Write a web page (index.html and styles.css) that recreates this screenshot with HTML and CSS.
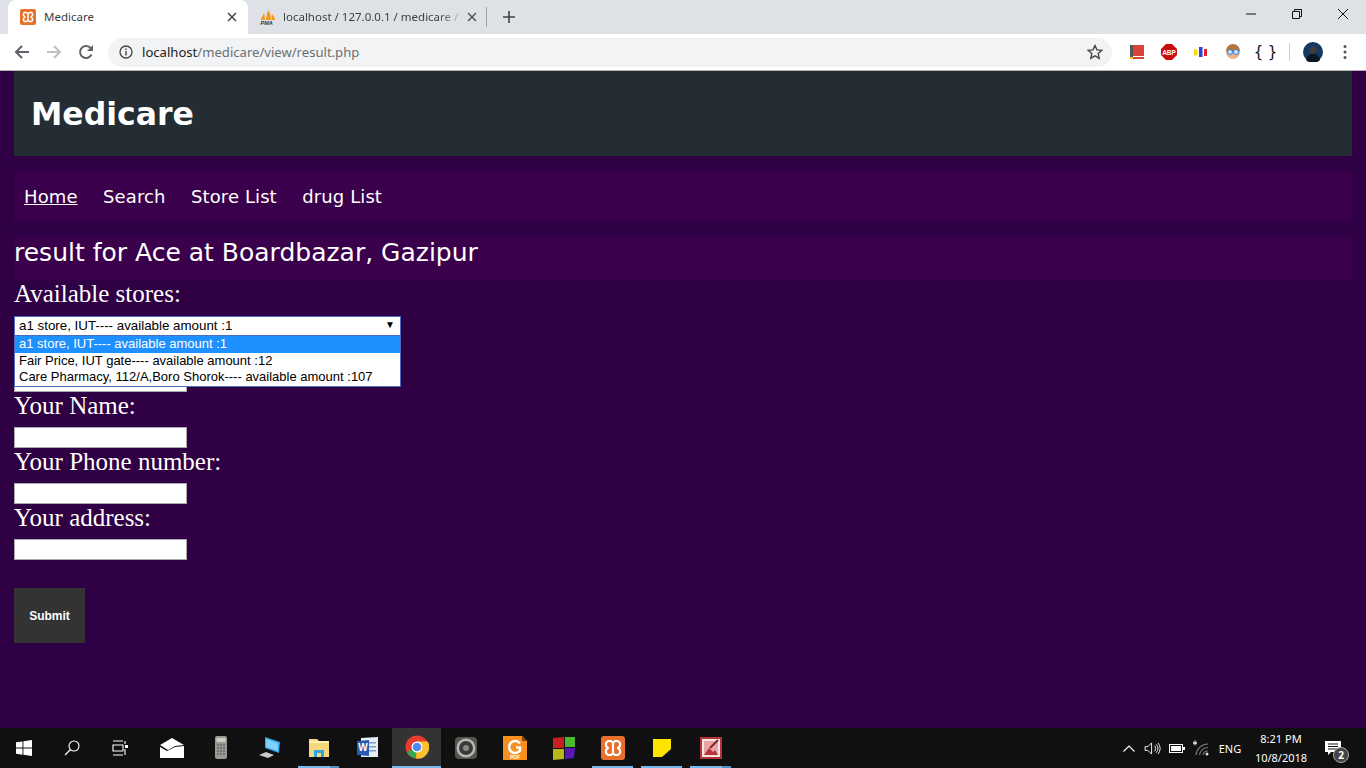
FILE: index.html
```html
<!DOCTYPE html>
<html lang="en">
<head>
    <meta charset="UTF-8">
    <meta name="viewport" content="width=device-width, initial-scale=1.0">
    <title>Medicare</title>
    <link rel="stylesheet" href="styles.css">
</head>
<body>

    <!-- Browser tabs -->
    <div class="tabstrip">
        <div class="tab active">
            <svg class="favicon" viewBox="0 0 16 16"><rect width="16" height="16" rx="2" fill="#e8702a"/><path d="M4.500 3.500h2L8 5l1.500-1.500h2l1 1v2L11 8l1.500 1.500v2l-1 1h-2L8 11l-1.500 1.500h-2l-1-1v-2L5 8 3.500 6.500v-2zM8 5v6" fill="none" stroke="#fff" stroke-width="1.500" stroke-linejoin="round"/></svg>
            <span class="tab-title">Medicare</span>
            <svg class="tab-close" viewBox="0 0 10 10"><path d="M1 1l8 8M9 1l-8 8" stroke="#444" stroke-width="1.500"/></svg>
        </div>
        <div class="tab">
            <svg class="favicon" viewBox="0 0 16 16"><path d="M1 11c0-3 2-4 3-7 .5 2 1 4 1 7zM6 11c0-4 1-7 2.500-10C10 4 11 7 11 11zM11.500 11c0-2 0-4 .5-6 1.500 2 3 4 3 6z" fill="#f29a1f"/><text x="0.500" y="15.500" class="pma">PMA</text></svg>
            <span class="tab-title fade">localhost / 127.0.0.1 / medicare /</span>
            <svg class="tab-close" viewBox="0 0 10 10"><path d="M1 1l8 8M9 1l-8 8" stroke="#555" stroke-width="1.500"/></svg>
        </div>
        <div class="tab-sep"></div>
        <svg class="new-tab" viewBox="0 0 12 12"><path d="M6 0v12M0 6h12" stroke="#444" stroke-width="1.600"/></svg>
        <div class="win-controls">
            <svg viewBox="0 0 12 12"><path d="M1 6h10" stroke="#111" stroke-width="1"/></svg>
            <svg viewBox="0 0 12 12"><path d="M1.500 3.500h7v7h-7zM3.500 3.500v-2h7v7h-2" fill="none" stroke="#111" stroke-width="1"/></svg>
            <svg viewBox="0 0 12 12"><path d="M1 1l10 10M11 1L1 11" stroke="#111" stroke-width="1"/></svg>
        </div>
    </div>

    <!-- Address bar -->
    <div class="toolbar">
        <svg class="nav-icon" viewBox="0 0 16 16"><path d="M15 8H2M8 2L2 8l6 6" fill="none" stroke="#5f6368" stroke-width="2"/></svg>
        <svg class="nav-icon" viewBox="0 0 16 16"><path d="M1 8h13M8 2l6 6-6 6" fill="none" stroke="#bdc1c6" stroke-width="2"/></svg>
        <svg class="nav-icon" viewBox="0 0 16 16"><path d="M13.500 10.500A6 6 0 1 1 12.300 3.800L14 5.500" fill="none" stroke="#5f6368" stroke-width="2"/><path d="M15 1v6H9z" fill="#5f6368"/></svg>
        <div class="omnibox">
            <svg class="info" viewBox="0 0 14 14"><circle cx="7" cy="7" r="6" fill="none" stroke="#444" stroke-width="1.300"/><path d="M7 6v4.500M7 3.500v1.500" stroke="#444" stroke-width="1.400"/></svg>
            <span class="url"><span class="host">localhost</span>/medicare/view/result.php</span>
            <svg class="star" viewBox="0 0 16 16"><path d="M8 1.500l2 4.400 4.800.5-3.600 3.200 1 4.700L8 11.900l-4.200 2.400 1-4.700L1.200 6.400 6 5.900z" fill="none" stroke="#444" stroke-width="1.400"/></svg>
        </div>
        <div class="extensions">
            <svg viewBox="0 0 16 16"><rect x="1" y="1" width="14" height="14" fill="#d9433a"/><rect x="1" y="1" width="3" height="14" fill="#555"/><rect x="4" y="12" width="11" height="1" fill="#fff"/><path d="M1 13h3v2H1z" fill="#f5c518"/></svg>
            <svg viewBox="0 0 16 16"><path d="M5 0h6l5 5v6l-5 5H5l-5-5V5z" fill="#c70d0d"/><text x="8" y="10.800" class="abp">ABP</text></svg>
            <svg viewBox="0 0 16 16"><rect x="1" y="5.500" width="3.500" height="6" fill="#f5d90a"/><rect x="6" y="3" width="3.500" height="10" fill="#2a43d8"/><rect x="11" y="5" width="3" height="7" fill="#e8202a"/></svg>
            <svg viewBox="0 0 16 16"><circle cx="8" cy="8" r="7" fill="#e8b48c"/><path d="M1 7a7 7 0 0 1 14 0z" fill="#b5743a"/><circle cx="5" cy="8" r="2.500" fill="#cfe6fb" stroke="#2a7fd8"/><circle cx="11" cy="8" r="2.500" fill="#cfe6fb" stroke="#2a7fd8"/></svg>
            <span class="braces">{ }</span>
        </div>
        <div class="toolbar-sep"></div>
        <svg class="avatar" viewBox="0 0 20 20"><circle cx="10" cy="10" r="10" fill="#123a63"/><circle cx="10" cy="8" r="3.500" fill="#4a3a35"/><path d="M3 18c1-5 4-6 7-6s6 1 7 6a10 10 0 0 1-14 0z" fill="#0b1524"/></svg>
        <svg class="menu" viewBox="0 0 4 16"><circle cx="2" cy="2.500" r="1.500" fill="#555"/><circle cx="2" cy="8" r="1.500" fill="#555"/><circle cx="2" cy="13.500" r="1.500" fill="#555"/></svg>
    </div>

    <!-- Page content -->
    <div class="page">
        <div class="site-header">
            <h1>Medicare</h1>
        </div>

        <div class="site-nav">
            <a class="current" href="#">Home</a>
            <a href="#">Search</a>
            <a href="#">Store List</a>
            <a href="#">drug List</a>
        </div>

        <h2 class="result-title">result for Ace at Boardbazar, Gazipur</h2>

        <form class="order-form">
            <label>Available stores:</label>
            <div class="store-select">
                <div class="store-current">a1 store, IUT---- available amount :1<span class="arrow">&#9660;</span></div>
                <div class="store-list">
                    <div class="store-option selected">a1 store, IUT---- available amount :1</div>
                    <div class="store-option">Fair Price, IUT gate---- available amount :12</div>
                    <div class="store-option">Care Pharmacy, 112/A,Boro Shorok---- available amount :107</div>
                </div>
            </div>
            <input type="text">
            <label>Your Name:</label>
            <input type="text">
            <label>Your Phone number:</label>
            <input type="text">
            <label>Your address:</label>
            <input type="text">
            <button type="button" class="submit-btn">Submit</button>
        </form>
    </div>

    <!-- Windows taskbar -->
    <div class="taskbar">
        <div class="task"><svg viewBox="0 0 16 16"><path d="M0 2.300l6.500-.9v6.200H0zM7.400 1.300L16 0v7.600H7.400zM0 8.500h6.500v6.200L0 13.800zM7.400 8.500H16V16l-8.600-1.200z" fill="#fff"/></svg></div>
        <div class="task"><svg viewBox="0 0 16 16"><circle cx="10" cy="6" r="5" fill="none" stroke="#fff" stroke-width="1.100"/><path d="M6.500 9.500L1 15" stroke="#fff" stroke-width="1.300"/></svg></div>
        <div class="task"><svg viewBox="0 0 16 16"><path d="M1 1h10M1 5h10v6H1zM1 15h10M13 1v3M13 9v6" fill="none" stroke="#fff" stroke-width="1.100"/><rect x="13" y="5" width="3" height="3" fill="#fff"/></svg></div>
        <div class="task"><svg class="big" viewBox="0 0 24 20"><path d="M0 7l12-7 12 7-9 1-7 4z" fill="#fff"/><path d="M0 9l7 4 8-4 9-1v12H0z" fill="#fff"/></svg></div>
        <div class="task"><svg class="big" viewBox="0 0 24 24"><rect x="6" y="0" width="12" height="23" rx="2" fill="#9a9a94"/><rect x="7.500" y="2" width="9" height="4" fill="#c8d0c0"/><path d="M8 9h8M8 12h8M8 15h8M8 18h8" stroke="#666" stroke-width="1.500" stroke-dasharray="2 1"/></svg></div>
        <div class="task"><svg class="big" viewBox="0 0 24 24"><path d="M7 1l15 5-1 11-14-5z" fill="#35a7ee"/><path d="M8 3l12 4v8L8 11z" fill="#7fd0fa"/><path d="M1 19l7-3 8 3-6 3z" fill="#c8ccd0"/></svg></div>
        <div class="task pinned stacked"><svg class="big" viewBox="0 0 24 24"><path d="M2 3h8l2 2h10v16H2z" fill="#f6d77c"/><rect x="2" y="5" width="20" height="2" fill="#fff0b8"/><path d="M7 21v-7h10v7h-3v-4h-4v4z" fill="#2fa5e8"/></svg></div>
        <div class="task"><svg class="big" viewBox="0 0 24 24"><path d="M5 2l17-1v20H5z" fill="#e6edf7"/><rect x="13" y="6" width="7" height="1.500" fill="#7c9bd0"/><rect x="13" y="10" width="7" height="1.500" fill="#7c9bd0"/><rect x="13" y="14" width="7" height="1.500" fill="#7c9bd0"/><path d="M1 5l12-1v16L1 19z" fill="#2a5bb0"/><text x="7" y="15" class="word">W</text></svg></div>
        <div class="task active"><svg class="big" viewBox="0 0 24 24"><circle cx="12" cy="12" r="11.500" fill="#e53d30"/><path d="M12 12L2 17a11.500 11.500 0 0 0 9 6.500z" fill="#34a853"/><path d="M12 6.500h10.700A11.500 11.500 0 0 1 11 23.500z" fill="#fbc02d"/><circle cx="12" cy="12" r="5.500" fill="#fff"/><circle cx="12" cy="12" r="4.300" fill="#4a8af4"/></svg></div>
        <div class="task"><svg class="big" viewBox="0 0 24 24"><rect x="1" y="1" width="22" height="22" rx="4" fill="#55554f"/><circle cx="12" cy="12" r="9.500" fill="#b8b8b4"/><circle cx="12" cy="12" r="7" fill="#3a3a38"/><circle cx="12" cy="12" r="3" fill="#8a8a86"/></svg></div>
        <div class="task"><svg class="big" viewBox="0 0 24 24"><path d="M0 0h19l5 5v19H0z" fill="#f7901e"/><path d="M19 0l5 5h-5z" fill="#7a4a10"/><path d="M17 7.500a6 6 0 1 0 0 7v-3h-4" fill="none" stroke="#fff" stroke-width="2.500"/><text x="12" y="22.500" class="fox">PDF</text></svg></div>
        <div class="task"><svg class="big" viewBox="0 0 24 24"><path d="M1 2l11-1v11H1z" fill="#c8201c"/><path d="M13 1l10 0v10H13z" fill="#4cb82c"/><path d="M1 13h11v10L1 24z" fill="#b8b81e"/><path d="M13 12h10l-1 10-9 1z" fill="#5a18b8"/></svg></div>
        <div class="task pinned"><svg class="big" viewBox="0 0 24 24"><rect width="24" height="24" rx="3" fill="#e8702a"/><path d="M7 5h3l2 2 2-2h3l2 2v3l-2 2 2 2v3l-2 2h-3l-2-2-2 2H7l-2-2v-3l2-2-2-2V7zM12 7v10" fill="none" stroke="#fff" stroke-width="2.200" stroke-linejoin="round"/></svg></div>
        <div class="task pinned"><svg class="big" viewBox="0 0 24 24"><rect x="3" y="3" width="18" height="18" fill="#fde400"/><path d="M21 13v8H12z" fill="#111"/></svg></div>
        <div class="task pinned stacked"><svg class="big" viewBox="0 0 24 24"><rect x="1" y="1" width="22" height="22" fill="#b8323a"/><rect x="3" y="3" width="18" height="18" fill="#f6e6e2"/><rect x="5" y="5" width="14" height="14" fill="#e9a5a5"/><path d="M5 19l5-7 4 4 2-2 3 5z" fill="#b8323a"/><path d="M11 12l8-8" stroke="#8c1f28" stroke-width="2"/></svg></div>

        <div class="tray">
            <svg class="tray-chevron" viewBox="0 0 12 7"><path d="M.5 6.500L6 1l5.500 5.500" fill="none" stroke="#fff" stroke-width="1.100"/></svg>
            <svg class="tray-speaker" viewBox="0 0 18 14"><path d="M1 5h3l4-4v12l-4-4H1z" fill="none" stroke="#fff"/><path d="M11 4a4 4 0 0 1 0 6M13 2.500a7 7 0 0 1 0 9M15 1a10 10 0 0 1 0 12" fill="none" stroke="#fff"/></svg>
            <svg class="tray-battery" viewBox="0 0 16 9"><rect x=".5" y=".5" width="13" height="8" fill="none" stroke="#fff"/><rect x="2" y="2" width="10" height="5" fill="#fff"/><rect x="14" y="3" width="2" height="3" fill="#fff"/></svg>
            <svg class="tray-wifi" viewBox="0 0 16 16"><path d="M3 15A12 12 0 0 1 15 4M6.500 15A8.500 8.500 0 0 1 15 7.500M10 15a5 5 0 0 1 5-4" fill="none" stroke="#777" stroke-width="1.200"/><circle cx="14" cy="14" r="1.500" fill="#ddd"/><path d="M2 .5v5M0 2l4 2M4 2L0 4" stroke="#fff" stroke-width=".9"/></svg>
            <span class="tray-lang">ENG</span>
            <div class="tray-clock"><span>8:21 PM</span><span>10/8/2018</span></div>
            <div class="tray-notify">
                <svg viewBox="0 0 16 15"><path d="M0 0h16v11H6l-3 3v-3H0z" fill="#fff"/><path d="M3 3h10M3 5.500h10M3 8h10" stroke="#111"/></svg>
                <span class="notify-count">2</span>
            </div>
        </div>
    </div>

</body>
</html>
```

FILE: styles.css
```css
* {
    box-sizing: border-box;
}
body {
    margin: 0;
    height: 100vh;
    display: flex;
    flex-direction: column;
    overflow: hidden;
    background-color: #300044;
    font-family: 'Liberation Serif', serif;
}

/* Browser tabs */
.tabstrip {
    height: 34px;
    flex: none;
    display: flex;
    align-items: flex-end;
    padding-left: 8px;
    background-color: #dee1e6;
    font-family: 'Noto Sans', sans-serif;
}
.tab {
    width: 240px;
    height: 34px;
    flex: none;
    display: flex;
    align-items: center;
    padding: 0 11px 0 12px;
    font-size: 11.5px;
    color: #3c4043;
}
.tab.active {
    background-color: #fff;
    border-radius: 8px 8px 0 0;
}
.tab .favicon {
    width: 16px;
    height: 16px;
    flex: none;
    margin-right: 8px;
}
.tab + .tab .favicon {
    margin-right: 7px;
}
.tab-title {
    flex: 1;
    padding-bottom: 1px;
    white-space: nowrap;
    overflow: hidden;
}
.tab-title.fade {
    -webkit-mask-image: linear-gradient(to right, #000 88%, rgba(0, 0, 0, 0.2));
    mask-image: linear-gradient(to right, #000 88%, rgba(0, 0, 0, 0.2));
}
.tab-close {
    width: 10px;
    height: 10px;
    flex: none;
    margin-left: 8px;
}
.pma {
    font: italic bold 5.500px 'Liberation Sans', sans-serif;
    fill: #333;
}
.tab-sep {
    width: 1px;
    height: 20px;
    margin: 0 0 7px -2px;
    background-color: #a0a4a8;
}
.new-tab {
    width: 12px;
    height: 12px;
    margin: 0 0 11px 16px;
}
.win-controls {
    margin-left: auto;
    align-self: flex-start;
    display: flex;
    gap: 34px;
    padding: 8px 17px 0 0;
}
.win-controls svg {
    width: 12px;
    height: 12px;
}

/* Address bar */
.toolbar {
    height: 37px;
    flex: none;
    display: flex;
    align-items: center;
    padding: 0 18px 0 14px;
    background-color: #fff;
    border-bottom: 1px solid #b4b4b4;
}
.nav-icon {
    width: 16px;
    height: 16px;
    flex: none;
    margin-right: 16px;
}
.omnibox {
    width: 1004px;
    height: 29px;
    flex: none;
    display: flex;
    align-items: center;
    margin-left: -2px;
    padding: 0 9px 0 11px;
    background-color: #f1f3f4;
    border-radius: 15px;
    font-family: 'Noto Sans', sans-serif;
    font-size: 13.100px;
    color: #6b7075;
}
.info {
    width: 14px;
    height: 14px;
    margin-right: 9px;
}
.url {
    flex: 1;
}
.host {
    color: #202124;
}
.star {
    width: 16px;
    height: 16px;
}
.extensions {
    display: flex;
    align-items: center;
    gap: 16px;
    margin-left: 17px;
}
.extensions svg {
    width: 16px;
    height: 16px;
}
.abp {
    font: bold 6.500px 'Liberation Sans', sans-serif;
    fill: #fff;
    text-anchor: middle;
}
.braces {
    width: 16px;
    margin-left: -3px;
    font: 15px 'DejaVu Sans Mono', monospace;
    white-space: nowrap;
    letter-spacing: -2px;
    color: #111;
}
.toolbar-sep {
    width: 1px;
    height: 18px;
    margin: 0 13px 0 19px;
    background-color: #ccc;
}
.avatar {
    width: 20px;
    height: 20px;
    flex: none;
}
.menu {
    width: 4px;
    height: 16px;
    margin-left: 20px;
}

/* Page content */
.page {
    flex: 1;
    padding: 0 14px;
    color: #fff;
    min-height: 0;
}
.site-header {
    height: 85px;
    display: flex;
    align-items: center;
    padding-left: 17px;
    background-color: #232d33;
}
.site-header h1 {
    margin: 0;
    font: bold 31.500px 'DejaVu Sans', sans-serif;
}
.site-nav {
    height: 49px;
    margin-top: 16px;
    display: flex;
    align-items: center;
    gap: 25.500px;
    padding-left: 10px;
    background-color: #3b004b;
}
.site-nav a {
    font: 18px 'DejaVu Sans', sans-serif;
    letter-spacing: 0.100px;
    color: #fff;
    text-decoration: none;
}
.site-nav a.current {
    text-decoration: underline;
}
.result-title {
    height: 43px;
    margin: 16px 0 0;
    font: 25px/32px 'DejaVu Sans', sans-serif;
    background-color: #3b004b;
}
.order-form {
    display: flex;
    flex-direction: column;
    align-items: flex-start;
}
.order-form label {
    height: 27px;
    margin-bottom: 8px;
    font-size: 25px;
    line-height: 27px;
}
.order-form label:first-child {
    margin-bottom: 9px;
}
.order-form input {
    width: 173px;
    height: 21px;
    margin: 0;
    padding: 1px 2px;
    background-color: #fff;
    border: 1px solid #aaa;
}
.store-select {
    position: relative;
    width: 387px;
    height: 20px;
    margin-bottom: 35px;
    font: 13px 'Liberation Sans', sans-serif;
    color: #000;
}
.store-current {
    height: 20px;
    padding: 1px 4px;
    background-color: #fff;
    border: 1px solid #4a6fbf;
    font-size: 13.330px;
    line-height: 16px;
}
.arrow {
    position: absolute;
    top: 1px;
    right: 6px;
    font-size: 10px;
}
.store-list {
    position: absolute;
    top: 19px;
    left: 0;
    width: 387px;
    height: 52px;
    background-color: #fff;
    border: 1px solid #4a6fbf;
}
.store-option {
    height: 17px;
    padding: 0 4px;
    line-height: 16px;
    white-space: nowrap;
}
.store-option:last-child {
    line-height: 14px;
}
.store-option.selected {
    background-color: #1e90ff;
    color: #fff;
}
.submit-btn {
    width: 71px;
    height: 55px;
    margin-top: 28px;
    background-color: #333;
    color: #fff;
    border: none;
    font: bold 12px 'Liberation Sans', sans-serif;
}

/* Windows taskbar */
.taskbar {
    height: 40px;
    flex: none;
    display: flex;
    background-color: #101010;
}
.task {
    position: relative;
    width: 49px;
    height: 40px;
    flex: none;
    display: flex;
    align-items: center;
    justify-content: center;
}
.task:nth-child(-n+3) {
    width: 48px;
}
.task:nth-child(4) {
    margin-left: 3px;
}
.task svg {
    width: 16px;
    height: 16px;
}
.task svg.big {
    width: 24px;
    height: 24px;
}
.task.active {
    background-color: #333;
    border-bottom: 2px solid #76b9ed;
}
.task.pinned::after {
    content: "";
    position: absolute;
    left: 4px;
    right: 4px;
    bottom: 0;
    height: 2px;
    background-color: #76b9ed;
}
.task.stacked::after {
    background: linear-gradient(to right, #76b9ed 78%, #4f8fc4 78%);
}
.word {
    font: bold 10px 'Liberation Sans', sans-serif;
    fill: #fff;
    text-anchor: middle;
}
.fox {
    font: bold 5px 'Liberation Sans', sans-serif;
    fill: #fff;
    text-anchor: middle;
}
.tray {
    margin-left: auto;
    display: flex;
    align-items: center;
    padding-right: 9px;
    color: #fff;
    font: 11px 'Noto Sans', sans-serif;
}
.tray-chevron {
    width: 12px;
    height: 7px;
    margin-right: 9px;
}
.tray-speaker {
    width: 17px;
    height: 13px;
    margin-right: 8px;
}
.tray-battery {
    width: 16px;
    height: 9px;
    margin-right: 8px;
}
.tray-wifi {
    width: 16px;
    height: 16px;
    margin-right: 9px;
}
.tray-lang {
    width: 24px;
    margin-right: 5px;
    text-align: center;
}
.tray-clock {
    width: 68px;
    display: flex;
    flex-direction: column;
    align-items: center;
    line-height: 19px;
}
.tray-notify {
    position: relative;
    width: 48px;
    display: flex;
    justify-content: center;
    margin-left: -6px;
}
.tray-notify svg {
    width: 16px;
    height: 15px;
}
.notify-count {
    position: absolute;
    top: 6px;
    left: 24px;
    width: 16px;
    height: 16px;
    border-radius: 50%;
    background-color: #444;
    border: 1px solid #aaa;
    text-align: center;
    font-size: 10px;
    font-weight: 700;
    line-height: 14px;
}
```
